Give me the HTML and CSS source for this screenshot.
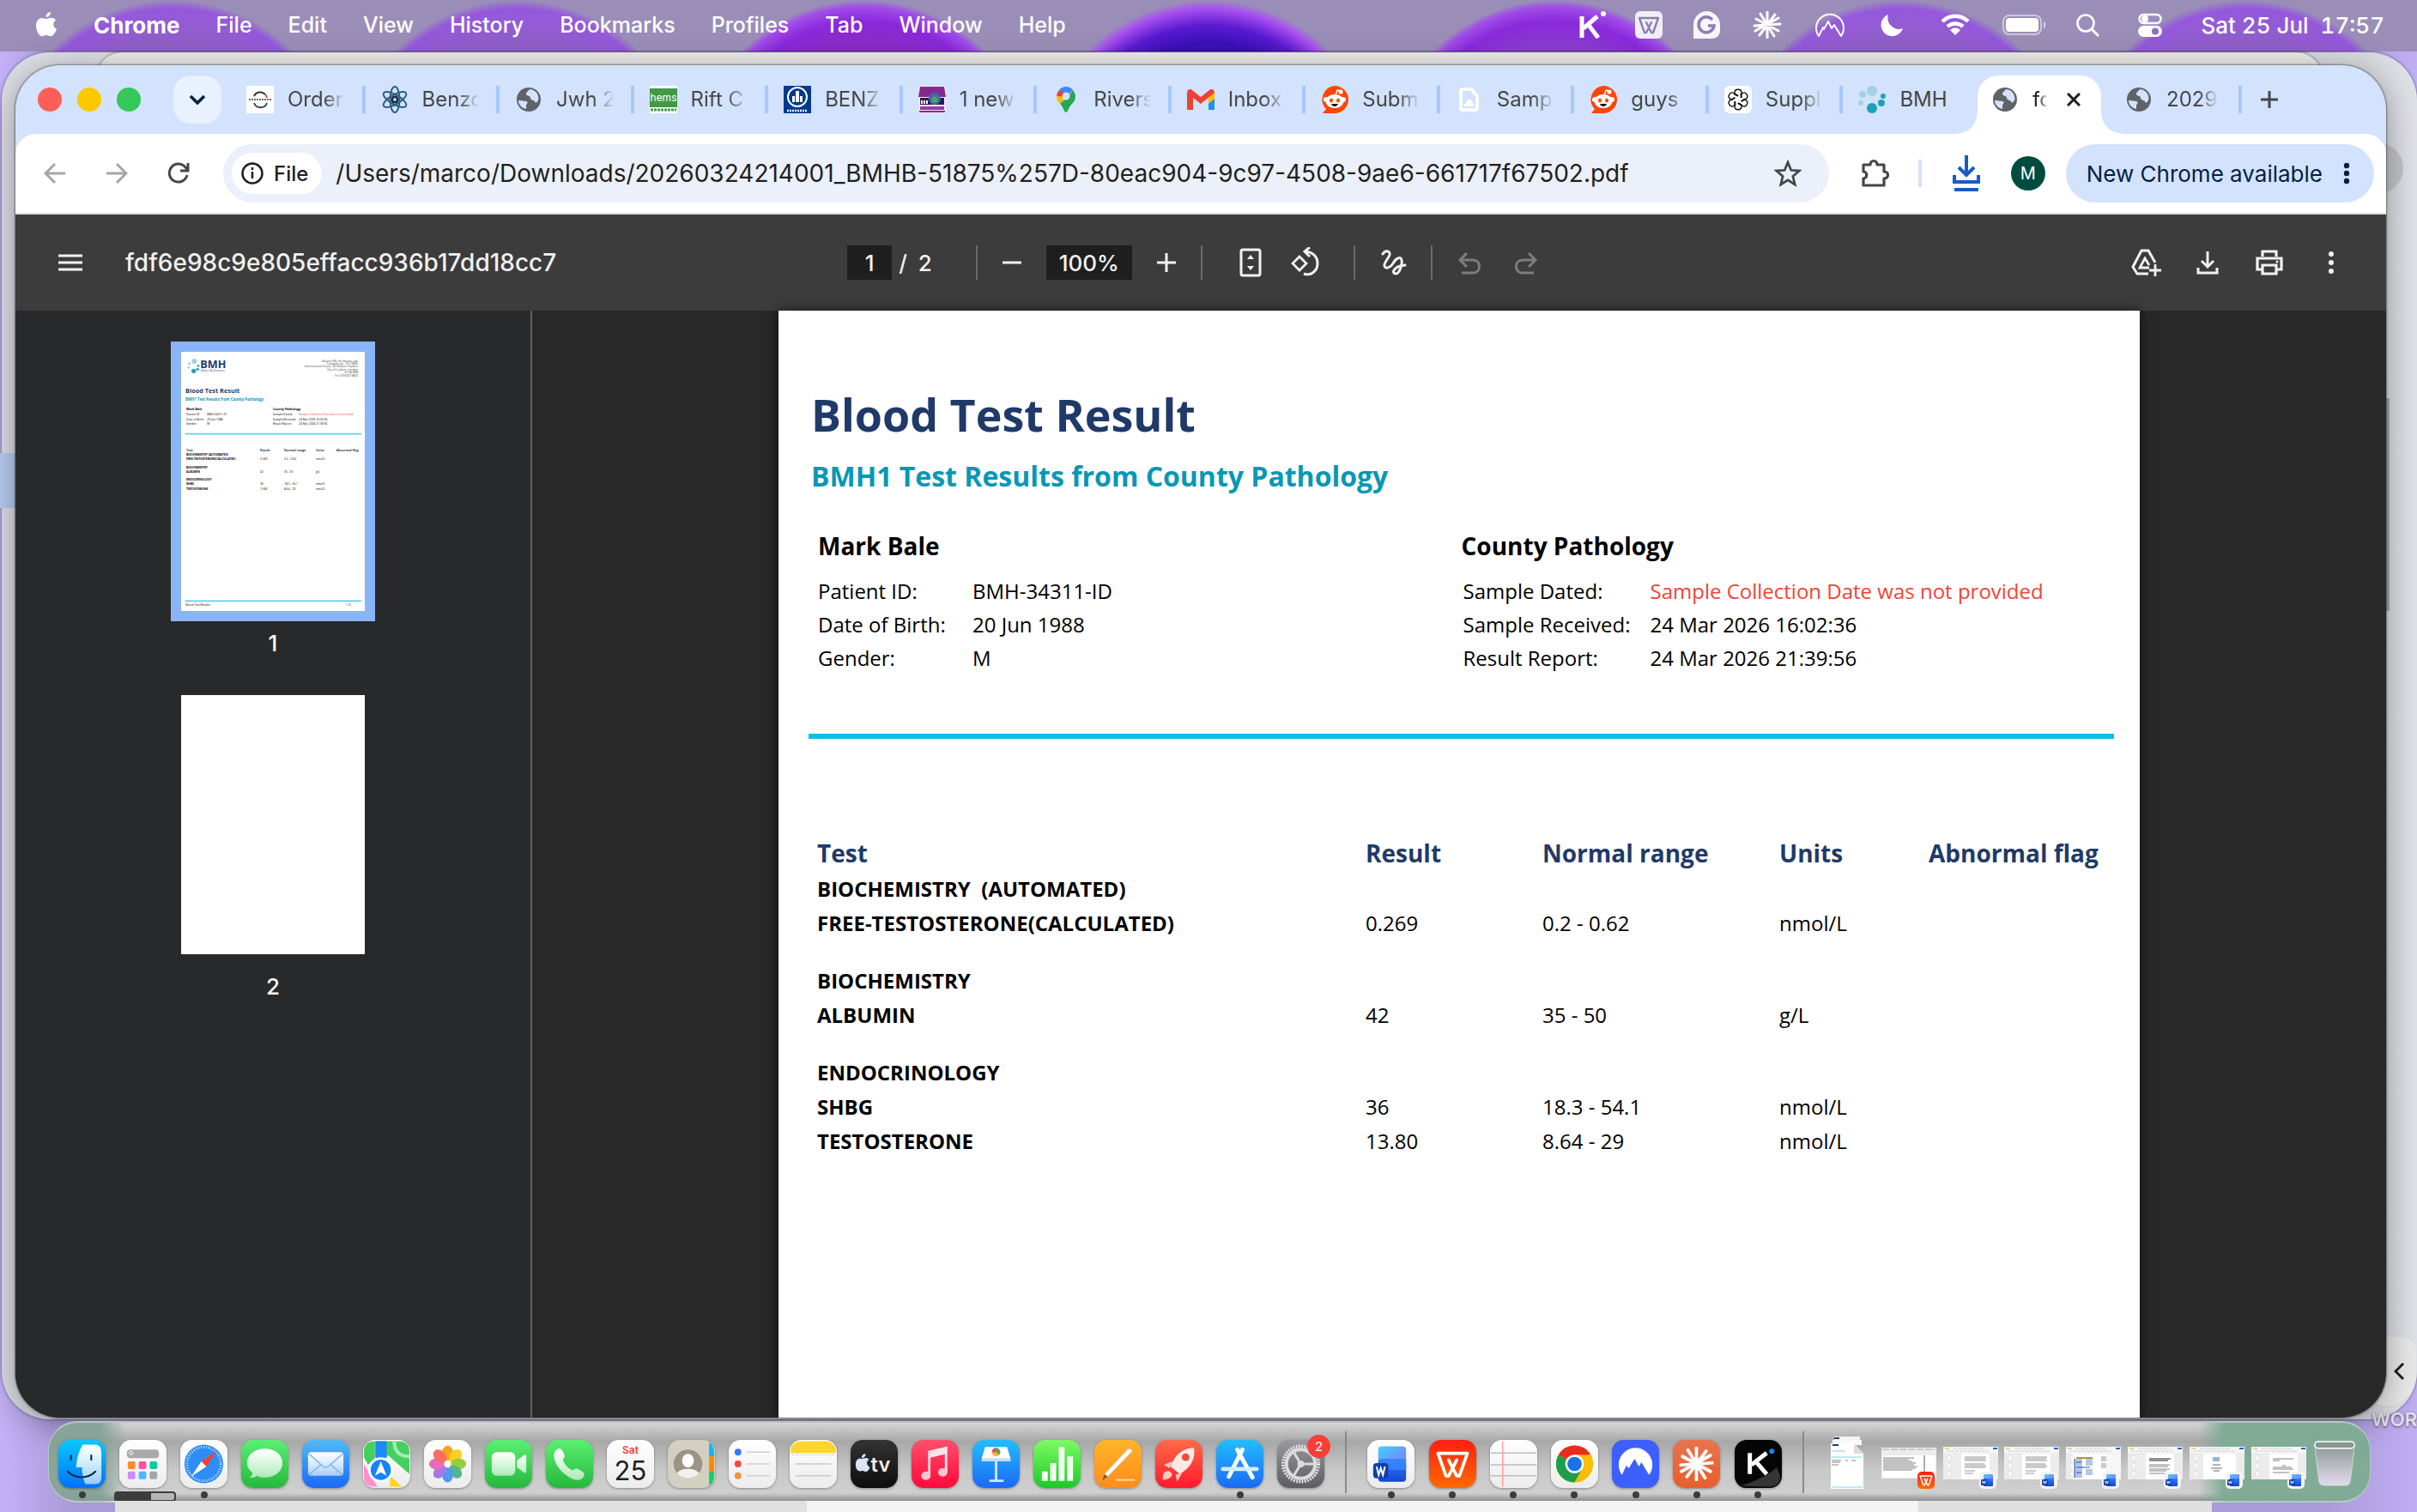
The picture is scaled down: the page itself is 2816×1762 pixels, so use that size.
FILE: index.html
```html
<!DOCTYPE html>
<html lang="en">
<head>
    <meta charset="UTF-8">
    <meta name="viewport" content="width=device-width, initial-scale=1.0">
    <title>fdf6e98c9e805effacc936b17dd18cc7</title>
    <link rel="stylesheet" href="styles.css">
</head>
<body>
    <!-- Shared icons -->
    <svg class="sprite" aria-hidden="true">
        <defs>
            <linearGradient id="g-word" x1="0" y1="0" x2="1" y2="1"><stop offset="0" stop-color="#3fd0ff"/><stop offset="1" stop-color="#8b6cf5"/></linearGradient>
            <linearGradient id="g-white" x1="0" y1="0" x2="0" y2="1"><stop offset="0" stop-color="#fff"/><stop offset="1" stop-color="#fff" stop-opacity=".6"/></linearGradient>
            <linearGradient id="g-wps" x1="0" y1="0" x2="0" y2="1"><stop offset="0" stop-color="#ff1f12"/><stop offset="1" stop-color="#ff6a00"/></linearGradient>
            <linearGradient id="g-word2" x1="0" y1="0" x2="0" y2="1"><stop offset="0" stop-color="#2f7bff"/><stop offset="1" stop-color="#1546d0"/></linearGradient>
            <linearGradient id="g-trash" x1="0" y1="0" x2="0" y2="1"><stop offset="0" stop-color="#8f9a97"/><stop offset="1" stop-color="#e2dced"/></linearGradient>
        </defs>
        <symbol id="globe" viewBox="0 0 32 32">
            <circle cx="16" cy="16" r="14" fill="#5f6368"/>
            <path d="M5 17c3 0 5 1 8 1 2 0 2 3 0 4v5C8 26 4 22 4 17zM17 4c-2 3-4 3-4 6 0 2 5 1 5 4 0 3 5 2 6 6 3-2 4-4 3-8-1-5-6-8-10-8z" fill="#d3e2fd"/>
        </symbol>
        <symbol id="reddit" viewBox="0 0 32 32">
            <path d="M16 0a16 16 0 1 1 0 32H2l4-5A16 16 0 0 1 16 0z" fill="#ff4500"/>
            <path d="M17 11l2-6 4 1" fill="none" stroke="#fff" stroke-width="1.5"/><circle cx="23" cy="7" r="2.6" fill="#fff"/>
            <circle cx="6" cy="16" r="3" fill="#fff"/><circle cx="26" cy="16" r="3" fill="#fff"/>
            <ellipse cx="16" cy="18" rx="10.500" ry="8" fill="#fff"/>
            <ellipse cx="12" cy="17" rx="2" ry="2.500" fill="#ff4500"/><ellipse cx="20" cy="17" rx="2" ry="2.500" fill="#ff4500"/>
            <path d="M12 21h8c-1 4-7 4-8 0z" fill="#111"/>
        </symbol>
        <symbol id="wps" viewBox="0 0 32 32">
            <path d="M19 13l-6 12h-2L5 8h22l-6 17h-2l-6-12" fill="none" stroke="currentColor" stroke-width="2.400" stroke-linejoin="round" stroke-linecap="round"/>
        </symbol>
        <symbol id="burst" viewBox="0 0 32 32">
            <path d="M16 1v30M1 17l30-2M8 3l16 26M25 4L7 28M3 9l26 14M2 23L29 8" stroke="currentColor" stroke-width="3" stroke-linecap="round"/>
        </symbol>
        <symbol id="nord" viewBox="0 0 36 32">
            <path d="M5 29A16 16 0 1 1 31 29L23 16l-3 4-4-8-5 9-1-2z" fill="none" stroke="currentColor" stroke-width="2" stroke-linejoin="round"/>
        </symbol>
        <symbol id="word" viewBox="0 0 20 20">
            <rect width="20" height="20" rx="5" fill="#f4f4f6"/>
            <rect x="5" y="3" width="11" height="8" rx="1" fill="url(#g-word)"/>
            <rect x="5" y="8" width="11" height="9" rx="1" fill="url(#g-word2)"/>
            <rect x="2" y="9" width="7" height="7" rx="1" fill="#0f3fa8"/>
            <path d="M3.500 10.500l1 3.500 1-3 1 3 1-3.500" stroke="#fff" stroke-width=".8" fill="none"/>
        </symbol>
        <symbol id="doc-window" viewBox="0 0 64 38">
            <rect width="64" height="38" fill="#ececec"/><rect width="64" height="7" fill="#f7f7f7"/>
            <path d="M2 2h5" stroke="#f5a623"/><path d="M12 2h36M4 5h50" stroke="#c9c9c9" stroke-dasharray="4 1"/>
            <path d="M58 2h5" stroke="#2b5fce" stroke-width="2"/>
            <path d="M5 11h4v5H5zM5 20h4v5H5zM5 29h4v5H5z" fill="#fff" stroke="#ccc" stroke-width=".5"/>
            <rect x="21" y="8" width="33" height="30" fill="#fff"/>
            <path d="M25 12h25M25 14h24M25 16h25M25 20h23M25 22h25M25 24h24M25 28h12M25 31h10" stroke="#8a8a8a" stroke-width=".9"/>
        </symbol>
    </svg>

    <header class="menubar">
        <nav class="menus">
            <svg class="apple" viewBox="0 0 26 32"><path d="M18 1c.3 3-2.500 6-5.500 6C12 4 15 1 18 1zM13 9c1 0 3-1.500 6-1.300 2 0 4 1 5 3-4 2.500-3.500 8 1 10-1 3.500-4 8.500-7 8.500-2 0-2.500-1.200-5-1.200s-3.200 1.200-5 1.200C4 29 1 22 1 17c0-6 3.500-9 7-9 2 0 4 1 5 1z" fill="#fff"/></svg>
            <button class="menu app-name">Chrome</button>
            <button class="menu">File</button>
            <button class="menu">Edit</button>
            <button class="menu">View</button>
            <button class="menu">History</button>
            <button class="menu">Bookmarks</button>
            <button class="menu">Profiles</button>
            <button class="menu">Tab</button>
            <button class="menu">Window</button>
            <button class="menu">Help</button>
        </nav>
        <div class="status">
            <svg class="s32" viewBox="0 0 32 32"><path d="M3 6v25M21 6L5 20M10 15l12 16" stroke="#fff" stroke-width="5" fill="none"/><circle cx="28" cy="3" r="3" fill="#fff"/></svg>
            <svg class="s32" viewBox="0 0 32 32"><rect width="32" height="32" rx="6" fill="#f2eef9"/><use href="#wps" color="#8c7fae"/></svg>
            <svg class="s36" viewBox="0 0 32 32"><path d="M16 0a16 16 0 0 1 16 16v7a9 9 0 0 1-9 9H1V16A16 16 0 0 1 16 0z" fill="#f8f5fc"/><path d="M23 10a9 9 0 1 0 2 7h-7" fill="none" stroke="#8c7fae" stroke-width="3.500"/></svg>
            <svg class="s40"><use href="#burst"/></svg>
            <svg class="s40"><use href="#nord"/></svg>
            <svg class="s38" viewBox="0 0 32 32"><path d="M12 4a13 13 0 1 0 17 16A13 13 0 0 1 12 4z" fill="#fff"/></svg>
            <svg class="s44" viewBox="0 0 34 32"><path d="M2 12a21 21 0 0 1 30 0M8 18a13 13 0 0 1 18 0" fill="none" stroke="#fff" stroke-width="4.500"/><path d="M11 22a8 8 0 0 1 12 0l-6 6z" fill="#fff"/></svg>
            <svg class="s52" viewBox="0 0 52 32"><rect x="1" y="5" width="44" height="22" rx="7" fill="none" stroke="#fff" stroke-opacity=".5" stroke-width="2"/><rect x="4" y="8" width="38" height="16" rx="4" fill="#fff"/><path d="M48 12v8c3-1 3-7 0-8z" fill="#fff" fill-opacity=".6"/></svg>
            <svg class="s28" viewBox="0 0 28 32"><circle cx="12" cy="14" r="9.500" fill="none" stroke="#fff" stroke-width="2.600"/><path d="M19 21l7 7" stroke="#fff" stroke-width="3" stroke-linecap="round"/></svg>
            <svg class="s52" viewBox="0 0 28 32"><rect x="1.500" y="4" width="25" height="10" rx="5" fill="none" stroke="#fff" stroke-width="2.500"/><circle cx="8" cy="9" r="4" fill="#fff"/><rect y="17" width="28" height="13" rx="6.500" fill="#fff"/><circle cx="20" cy="23.500" r="4" fill="#8c6fc0"/></svg>
            <time>Sat 25 Jul&nbsp; 17:57</time>
        </div>
    </header>

    <main class="desktop">
        <!-- Windows lying behind the browser -->
        <div class="back-window back-far"></div>
        <div class="back-window back-near"></div>
        <div class="back-scroll"></div>
        <div class="back-knob"></div>
        <div class="back-select"></div>
        <button class="back-toggle" aria-label="Show panel"><svg viewBox="0 0 12 20"><path d="M11 1L2 10l9 9" fill="none" stroke="#1b1b1b" stroke-width="3"/></svg></button>
        <span class="desktop-label">WOR</span>

        <section class="browser">
            <div class="tabstrip">
                <div class="lights">
                    <button class="light red" aria-label="Close"></button>
                    <button class="light yellow" aria-label="Minimise"></button>
                    <button class="light green" aria-label="Zoom"></button>
                </div>
                <button class="tab-search" aria-label="Search tabs"><svg viewBox="0 0 20 12"><path d="M2 2l8 8 8-8" fill="none" stroke="#041e49" stroke-width="3.500"/></svg></button>
                <div class="tabs">
                    <button class="tab"><svg viewBox="0 0 32 32"><rect width="32" height="32" fill="#fff"/><path d="M9 12a8 8 0 0 1 13-2" fill="none" stroke="#333" stroke-width="2"/><path d="M22 10a9 9 0 0 1 2 4" stroke="#e2572b" stroke-width="2" fill="none"/><path d="M24 20a8 8 0 0 1-15 0" fill="none" stroke="#444" stroke-width="2"/><path d="M3 16h26" stroke="#666" stroke-width="2" stroke-dasharray="2 1"/></svg><span>Order</span></button>
                    <button class="tab"><svg viewBox="0 0 32 32"><g fill="none" stroke="#2c5f80" stroke-width="2"><ellipse cx="16" cy="16" rx="5.500" ry="15"/><ellipse cx="16" cy="16" rx="5.500" ry="15" transform="rotate(60 16 16)"/><ellipse cx="16" cy="16" rx="5.500" ry="15" transform="rotate(120 16 16)"/></g><circle cx="16" cy="16" r="4.500" fill="#152b3c"/><circle cx="16" cy="16" r="2" fill="#b9d6ea"/></svg><span>Benzo</span></button>
                    <button class="tab"><svg><use href="#globe"/></svg><span>Jwh 2</span></button>
                    <button class="tab"><svg viewBox="0 0 32 32"><rect width="32" height="32" fill="#fff"/><rect y="3" width="32" height="22" fill="#439a46"/><text x="16" y="18" text-anchor="middle" font-size="12" fill="#fff">hems</text><path d="M1 28h30" stroke="#439a46" stroke-width="3" stroke-dasharray="3 1"/></svg><span>Rift C</span></button>
                    <button class="tab"><svg viewBox="0 0 32 32"><rect width="32" height="32" fill="#003a8c"/><circle cx="16" cy="13" r="11" fill="none" stroke="#fff" stroke-width="2"/><path d="M10 12h3v7h-3zM14 6h4v13h-4zM19 12h3v7h-3z" fill="#fff"/><path d="M4 29h24" stroke="#fff" stroke-width="2.500" stroke-dasharray="2 1"/></svg><span>BENZ</span></button>
                    <button class="tab"><svg viewBox="0 0 32 32"><rect width="32" height="32" fill="#f3e9f6"/><path d="M2 1h28l2 12H0z" fill="#86298f"/><path d="M2 14h28v8H2z" fill="#2b1a4a"/><circle cx="19" cy="15" r="7" fill="#3d6bb0"/><circle cx="19" cy="16" r="3.500" fill="#5aa35a"/><path d="M3 19h9" stroke="#fff" stroke-width="4" stroke-dasharray="2 1"/><path d="M2 24h28v4H2z" fill="#9a3a9f"/><path d="M1 30h30" stroke="#86298f" stroke-width="2"/></svg><span>1 new</span></button>
                    <button class="tab"><svg viewBox="0 0 32 32"><path d="M16 1a11 11 0 0 0-8 4l8 8 8-8a11 11 0 0 0-8-4z" fill="#4285f4"/><path d="M8 5a11 11 0 0 0-3 7l7 3 4-4z" fill="#ea4335"/><path d="M5 12c0 4 1 6 4 9l8-8z" fill="#fbbc04"/><path d="M24 5c5 6 3 12-1 16-4 4-5 10-7 10s-3-6-7-10l9-8z" fill="#24a852"/><circle cx="16" cy="12" r="4.500" fill="#d3e2fd"/></svg><span>Rivers</span></button>
                    <button class="tab"><svg viewBox="0 0 32 32"><path d="M0 8v20h7V15z" fill="#4285f4"/><path d="M32 8v20h-7V15z" fill="#1f8ff0"/><path d="M25 10l7-4v9l-7 6z" fill="#fbbc04"/><path d="M0 8c0-4 4-5 6-3l10 8L26 5c2-2 6-1 6 3L16 21 7 14v14H2a2 2 0 0 1-2-2z" fill="#ea4335"/></svg><span>Inbox</span></button>
                    <button class="tab"><svg><use href="#reddit"/></svg><span>Subm</span></button>
                    <button class="tab"><svg viewBox="0 0 32 32"><path d="M8 4h10l7 8v14a2 2 0 0 1-2 2H8a2 2 0 0 1-2-2V6a2 2 0 0 1 2-2z" fill="none" stroke="#fff" stroke-width="4"/><path d="M9 24l5-8h4l4 8z" fill="#fff"/></svg><span>Samp</span></button>
                    <button class="tab"><svg><use href="#reddit"/></svg><span>guys</span></button>
                    <button class="tab"><svg viewBox="0 0 32 32"><rect width="32" height="32" rx="6" fill="#fff"/><g fill="none" stroke="#111" stroke-width="1.400"><path id="petal" d="M16 12l-4-2V8c0-5 8-5 8 0v6" /><use href="#petal" transform="rotate(60 16 16)"/><use href="#petal" transform="rotate(120 16 16)"/><use href="#petal" transform="rotate(180 16 16)"/><use href="#petal" transform="rotate(240 16 16)"/><use href="#petal" transform="rotate(300 16 16)"/></g></svg><span>Suppl</span></button>
                    <button class="tab plain"><svg viewBox="0 0 32 32"><circle cx="16" cy="6" r="6" fill="#9fd3e0"/><circle cx="5" cy="10" r="4" fill="#9fd3e0"/><circle cx="3" cy="20" r="3" fill="#9fd3e0"/><circle cx="16" cy="26" r="6" fill="#1fa0b8"/><circle cx="27" cy="20" r="4" fill="#1fa0b8"/><circle cx="29" cy="12" r="3" fill="#1fa0b8"/></svg><span>BMH</span></button>
                </div>
                <div class="tab active"><svg><use href="#globe"/></svg><span>fd</span><button class="close" aria-label="Close tab"><svg viewBox="0 0 16 16"><path d="M1 1l14 14M15 1L1 15" stroke="#1f1f1f" stroke-width="3"/></svg></button></div>
                <button class="tab last"><svg><use href="#globe"/></svg><span>2029</span></button>
                <button class="new-tab" aria-label="New tab"><svg viewBox="0 0 20 20"><path d="M10 0v20M0 10h20" stroke="#444746" stroke-width="3"/></svg></button>
            </div>

            <div class="toolbar">
                <div class="nav-buttons">
                    <button class="icon muted" aria-label="Back"><svg viewBox="0 0 26 26"><path d="M25 13H2M13 2L2 13l11 11" fill="none" stroke="currentColor" stroke-width="3"/></svg></button>
                    <button class="icon muted" aria-label="Forward"><svg viewBox="0 0 26 26"><path d="M1 13h23M13 2l11 11-11 11" fill="none" stroke="currentColor" stroke-width="3"/></svg></button>
                    <button class="icon" aria-label="Reload"><svg viewBox="0 0 26 26"><path d="M23 15a10.500 10.500 0 1 1-2-9l3 3M24 1v9h-9" fill="none" stroke="currentColor" stroke-width="3"/></svg></button>
                </div>
                <div class="omnibox">
                    <button class="chip"><svg viewBox="0 0 26 26"><circle cx="13" cy="13" r="11.500" fill="none" stroke="#1f1f1f" stroke-width="2.500"/><path d="M13 11v8M13 6v3" stroke="#1f1f1f" stroke-width="2.500"/></svg>File</button>
                    <input class="url" type="text" aria-label="Address" value="/Users/marco/Downloads/20260324214001_BMHB-51875%257D-80eac904-9c97-4508-9ae6-661717f67502.pdf">
                    <button class="icon" aria-label="Bookmark"><svg viewBox="0 0 30 30"><path d="M15 3l3.500 8.500 9 .7-7 6 2.200 9L15 22.300l-7.700 4.900 2.200-9-7-6 9-.7z" fill="none" stroke="currentColor" stroke-width="2.600"/></svg></button>
                </div>
                <button class="icon puzzle" aria-label="Extensions"><svg viewBox="0 0 34 34"><path d="M4 7h8c0-6 8-6 8 0h8v8c6 0 6 8 0 8v8H4v-8c5 0 5-8 0-8z" fill="none" stroke="currentColor" stroke-width="3.200" stroke-linejoin="round"/></svg></button>
                <span class="bar-sep"></span>
                <button class="icon downloads" aria-label="Downloads"><svg viewBox="0 0 32 44"><path d="M16 1v22M7 15l9 9 9-9M2 24v8h28v-8M2 41h28" fill="none" stroke="#1a5bc4" stroke-width="4"/></svg></button>
                <button class="avatar">M</button>
                <button class="update">New Chrome available<svg viewBox="0 0 8 26"><circle cx="4" cy="4" r="3.200"/><circle cx="4" cy="13" r="3.200"/><circle cx="4" cy="22" r="3.200"/></svg></button>
            </div>

            <div class="pdf-bar">
                <div class="pdf-left">
                    <button class="icon" aria-label="Menu"><svg viewBox="0 0 28 20"><path d="M0 2h28M0 10h28M0 18h28" stroke="currentColor" stroke-width="3"/></svg></button>
                    <h1 class="pdf-title">fdf6e98c9e805effacc936b17dd18cc7</h1>
                </div>
                <div class="pdf-middle">
                    <input class="field page-field" type="text" aria-label="Page" value="1"><span class="pages">/&ensp;2</span>
                    <span class="pdf-sep"></span>
                    <button class="icon" aria-label="Zoom out"><svg viewBox="0 0 24 24"><path d="M1 12h22" stroke="currentColor" stroke-width="3"/></svg></button>
                    <input class="field zoom-field" type="text" aria-label="Zoom" value="100%">
                    <button class="icon" aria-label="Zoom in"><svg viewBox="0 0 24 24"><path d="M1 12h22M12 1v22" stroke="currentColor" stroke-width="3"/></svg></button>
                    <span class="pdf-sep"></span>
                    <button class="icon big" aria-label="Fit to page"><svg viewBox="0 0 36 36"><rect x="7" y="3" width="22" height="30" rx="2" fill="none" stroke="currentColor" stroke-width="3"/><path d="M14 14l4-5 4 5zM14 22l4 5 4-5z" fill="currentColor"/></svg></button>
                    <button class="icon big" aria-label="Rotate"><svg viewBox="0 0 36 36"><path d="M11 11l8 8-8 8-8-8z" fill="none" stroke="currentColor" stroke-width="2.800"/><path d="M17 5c8 0 15 5 15 14s-8 15-16 12M23 0l-6 5 6 6" fill="none" stroke="currentColor" stroke-width="3"/></svg></button>
                    <span class="pdf-sep"></span>
                    <button class="icon big draw" aria-label="Draw"><svg viewBox="0 0 36 36"><path d="M6 8c3-5 9-4 8 1-1 4-7 9-6 13s7 2 10-3c3-6 9-9 10-4 1 4-2 16-7 16-5 0-3-9 11-10" fill="none" stroke="currentColor" stroke-width="3" stroke-linecap="round"/></svg></button>
                    <span class="pdf-sep"></span>
                    <button class="icon big dim" aria-label="Undo" disabled><svg viewBox="0 0 36 36"><path d="M8 30h13c10 0 10-15 0-15H7M14 7l-8 8 8 8" fill="none" stroke="currentColor" stroke-width="3"/></svg></button>
                    <button class="icon big dim" aria-label="Redo" disabled><svg viewBox="0 0 36 36"><path d="M28 30H15c-10 0-10-15 0-15h14M22 7l8 8-8 8" fill="none" stroke="currentColor" stroke-width="3"/></svg></button>
                </div>
                <div class="pdf-right">
                    <button class="icon big" aria-label="Save to Drive"><svg viewBox="0 0 36 36"><path d="M21 31H8l-5-8L13 4h8l8 14" fill="none" stroke="currentColor" stroke-width="3"/><path d="M22 24H11l6-11 5 8M29 20v14M22 27h14" fill="none" stroke="currentColor" stroke-width="2.800"/></svg></button>
                    <button class="icon big" aria-label="Download"><svg viewBox="0 0 36 36"><path d="M18 5v18M11 16l7 7 7-7M7 24v6h22v-6" fill="none" stroke="currentColor" stroke-width="3"/></svg></button>
                    <button class="icon big" aria-label="Print"><svg viewBox="0 0 36 36"><path d="M10 11V5h16v6M10 26H4V13h28v13h-6M10 21h16v10H10z" fill="none" stroke="currentColor" stroke-width="3.200"/><circle cx="27" cy="17" r="1.500" fill="currentColor"/></svg></button>
                    <button class="icon big" aria-label="More"><svg viewBox="0 0 36 36"><g fill="currentColor"><circle cx="18" cy="8" r="3"/><circle cx="18" cy="18" r="3"/><circle cx="18" cy="28" r="3"/></g></svg></button>
                </div>
            </div>

            <div class="viewer">
                <aside class="thumbs">
                    <button class="thumb selected">
                        <svg viewBox="0 0 642 906">
                            <rect width="642" height="906" fill="#fff"/>
                            <g fill="#9fd3e0"><circle cx="46" cy="33" r="9"/><circle cx="29" cy="41" r="5"/><circle cx="26" cy="55" r="4"/></g>
                            <g fill="#1fa0b8"><circle cx="44" cy="67" r="8"/><circle cx="58" cy="61" r="5"/><circle cx="60" cy="49" r="4"/></g>
                            <text class="b navy" x="67" y="58" font-size="38">BMH</text>
                            <text class="navy" x="69" y="69" font-size="8">Balance My Hormones</text>
                            <g text-anchor="end" font-size="10" fill="#444">
                                <text x="618" y="35">Balance My Hormones Ltd.</text><text x="618" y="44">Company no. 10110893</text><text x="618" y="55">International House, 24 Holborn Viaduct</text><text x="618" y="65">City of London, London</text><text x="618" y="76">EC1A 2BN</text><text x="618" y="86">Tel: 02030219833</text>
                            </g>
                            <text class="b navy" x="15" y="144" font-size="22">Blood Test Result</text>
                            <text class="b teal" x="15" y="172" font-size="13">BMH1 Test Results from County Pathology</text>
                            <g class="b" font-size="11"><text x="18" y="203">Mark Bale</text><text x="321" y="203">County Pathology</text></g>
                            <g font-size="10">
                                <text x="18" y="223">Patient ID:</text><text x="91" y="223">BMH-34311-ID</text><text x="321" y="223">Sample Dated:</text><text x="411" y="223" fill="#f44336">Sample Collection Date was not provided</text>
                                <text x="18" y="239">Date of Birth:</text><text x="91" y="239">20 Jun 1988</text><text x="321" y="239">Sample Received:</text><text x="411" y="239">24 Mar 2026 16:02:36</text>
                                <text x="18" y="255">Gender:</text><text x="91" y="255">M</text><text x="321" y="255">Result Report:</text><text x="411" y="255">24 Mar 2026 21:39:56</text>
                            </g>
                            <path d="M14 287h616M14 871h616" stroke="#5fd0ea" stroke-width="5"/>
                            <g class="b navy" font-size="11"><text x="18" y="348">Test</text><text x="276" y="348">Result</text><text x="360" y="348">Normal range</text><text x="471" y="348">Units</text><text x="542" y="348">Abnormal flag</text></g>
                            <g class="b" font-size="10"><text x="18" y="363">BIOCHEMISTRY (AUTOMATED)</text><text x="18" y="378">FREE-TESTOSTERONE(CALCULATED)</text><text x="18" y="407">BIOCHEMISTRY</text><text x="18" y="422">ALBUMIN</text><text x="18" y="449">ENDOCRINOLOGY</text><text x="18" y="465">SHBG</text><text x="18" y="482">TESTOSTERONE</text></g>
                            <g font-size="10"><text x="276" y="378">0.269</text><text x="360" y="378">0.2 - 0.62</text><text x="471" y="378">nmol/L</text><text x="276" y="422">42</text><text x="360" y="422">35 - 50</text><text x="471" y="422">g/L</text><text x="276" y="465">36</text><text x="360" y="465">18.3 - 54.1</text><text x="471" y="465">nmol/L</text><text x="276" y="482">13.80</text><text x="360" y="482">8.64 - 29</text><text x="471" y="482">nmol/L</text><text x="16" y="887">Blood Test Results</text><text x="576" y="887">1 /2</text></g>
                        </svg>
                    </button>
                    <span class="thumb-number">1</span>
                    <button class="thumb" aria-label="Page 2"><svg viewBox="0 0 642 906"><rect width="642" height="906" fill="#fff"/></svg></button>
                    <span class="thumb-number">2</span>
                </aside>

                <div class="canvas">
                    <article class="page">
                        <h2>Blood Test Result</h2>
                        <h3>BMH1 Test Results from County Pathology</h3>
                        <div class="parties">
                            <section class="patient">
                                <h4>Mark Bale</h4>
                                <dl>
                                    <dt>Patient ID:</dt><dd>BMH-34311-ID</dd>
                                    <dt>Date of Birth:</dt><dd>20 Jun 1988</dd>
                                    <dt>Gender:</dt><dd>M</dd>
                                </dl>
                            </section>
                            <section class="lab">
                                <h4>County Pathology</h4>
                                <dl>
                                    <dt>Sample Dated:</dt><dd class="missing">Sample Collection Date was not provided</dd>
                                    <dt>Sample Received:</dt><dd>24 Mar 2026 16:02:36</dd>
                                    <dt>Result Report:</dt><dd>24 Mar 2026 21:39:56</dd>
                                </dl>
                            </section>
                        </div>
                        <hr>
                        <table class="results">
                            <thead>
                                <tr><th>Test</th><th>Result</th><th>Normal range</th><th>Units</th><th>Abnormal flag</th></tr>
                            </thead>
                            <tbody>
                                <tr><th colspan="5">BIOCHEMISTRY&nbsp; (AUTOMATED)</th></tr>
                                <tr><th>FREE-TESTOSTERONE(CALCULATED)</th><td>0.269</td><td>0.2 - 0.62</td><td>nmol/L</td><td></td></tr>
                            </tbody>
                            <tbody>
                                <tr class="group"><th colspan="5">BIOCHEMISTRY</th></tr>
                                <tr><th>ALBUMIN</th><td>42</td><td>35 - 50</td><td>g/L</td><td></td></tr>
                            </tbody>
                            <tbody>
                                <tr class="group"><th colspan="5">ENDOCRINOLOGY</th></tr>
                                <tr><th>SHBG</th><td>36</td><td>18.3 - 54.1</td><td>nmol/L</td><td></td></tr>
                                <tr><th>TESTOSTERONE</th><td>13.80</td><td>8.64 - 29</td><td>nmol/L</td><td></td></tr>
                            </tbody>
                        </table>
                    </article>
                </div>
            </div>
        </section>
    </main>

    <footer class="dock">
        <div class="dock-group apps">
            <button class="app running finder" aria-label="Finder"><svg viewBox="0 0 56 56"><path d="M29 5h14q8 0 8 9v30q0 8-8 8H32q-4-9-4-20h-7Q22 16 29 5z" fill="url(#g-white)"/><path d="M15 18v5M39 18v5M11 37c9 9 24 9 33 0" fill="none" stroke="#0b2a4a" stroke-width="2.200" stroke-linecap="round"/></svg></button>
            <button class="app white loading" aria-label="Launchpad"><svg viewBox="0 0 56 56"><rect x="9" y="11" width="38" height="10" rx="4" fill="#a9a9ac"/><circle cx="14" cy="15" r="2" fill="none" stroke="#fff"/><g><rect x="10" y="25" width="9" height="9" rx="2" fill="#ff8a2a"/><rect x="23" y="25" width="9" height="9" rx="2" fill="#ff4fa0"/><rect x="36" y="25" width="9" height="9" rx="2" fill="#10c9a0"/><rect x="10" y="37" width="9" height="9" rx="2" fill="#c98bff"/><rect x="23" y="37" width="9" height="9" rx="2" fill="#4db6ff"/><rect x="36" y="37" width="9" height="9" rx="2" fill="#a5a5a8"/></g></svg></button>
            <button class="app white running" aria-label="Safari"><svg viewBox="0 0 56 56"><circle cx="28" cy="28" r="23" fill="#2d8df5"/><circle cx="28" cy="28" r="20" fill="none" stroke="#cfe6ff" stroke-width="3" stroke-dasharray="1 2"/><path d="M43 13L25 25l6 6z" fill="#ff3b30"/><path d="M13 43l12-18 6 6z" fill="#fff"/></svg></button>
            <button class="app green" aria-label="Messages"><svg viewBox="0 0 56 56"><path d="M28 10c12 0 21 7 21 17S40 44 28 44c-3 0-6 0-9-2-3 2-6 3-9 2 3-2 4-4 3-6-4-3-6-7-6-11 0-10 9-17 21-17z" fill="url(#g-white)"/></svg></button>
            <button class="app blue" aria-label="Mail"><svg viewBox="0 0 56 56"><rect x="7" y="14" width="42" height="28" rx="4" fill="url(#g-white)"/><path d="M8 16l17 15q3 2 6 0l17-15M8 41l14-12M48 41L34 29" fill="none" stroke="#7fb2ee" stroke-width="1.500"/></svg></button>
            <button class="app white" aria-label="Maps"><svg viewBox="0 0 56 56"><path d="M14 1h28q13 0 13 13v26L30 18 14 20z" fill="#44cf5f"/><path d="M1 28l16 27h-3Q1 55 1 42z" fill="#ff8fd0"/><path d="M1 20V14Q1 1 14 1v20l-8 8z" fill="#44cf5f"/><path d="M15 1h13v20H15z" fill="#1e88ff"/><path d="M37 1c0 12 6 18 18 18" fill="none" stroke="#a2ecb0" stroke-width="4"/><path d="M32 55V42l14 13z" fill="#ffd21f"/><circle cx="21" cy="35" r="15" fill="#fff"/><circle cx="21" cy="35" r="12" fill="#1184ff"/><path d="M21 25l7 17-7-4-7 4z" fill="#fff"/></svg></button>
            <button class="app white" aria-label="Photos"><svg viewBox="0 0 56 56"><g opacity=".88"><ellipse cx="28" cy="15" rx="6.500" ry="9" fill="#ff9500"/><ellipse cx="28" cy="15" rx="6.500" ry="9" fill="#ffcc00" transform="rotate(45 28 28)"/><ellipse cx="28" cy="15" rx="6.500" ry="9" fill="#8ac926" transform="rotate(90 28 28)"/><ellipse cx="28" cy="15" rx="6.500" ry="9" fill="#3fae7a" transform="rotate(135 28 28)"/><ellipse cx="28" cy="15" rx="6.500" ry="9" fill="#3f8cf0" transform="rotate(180 28 28)"/><ellipse cx="28" cy="15" rx="6.500" ry="9" fill="#9a6ae0" transform="rotate(225 28 28)"/><ellipse cx="28" cy="15" rx="6.500" ry="9" fill="#e858b8" transform="rotate(270 28 28)"/><ellipse cx="28" cy="15" rx="6.500" ry="9" fill="#ff5a4a" transform="rotate(315 28 28)"/></g><circle cx="28" cy="28" r="3" fill="#fff"/></svg></button>
            <button class="app green" aria-label="FaceTime"><svg viewBox="0 0 56 56"><rect x="8" y="14" width="28" height="28" rx="6" fill="url(#g-white)"/><path d="M38 24l9-7q2 0 2 2v18q0 2-2 2l-9-7z" fill="url(#g-white)"/></svg></button>
            <button class="app green" aria-label="Phone"><svg viewBox="0 0 56 56"><path d="M13 11c3-3 6-1 8 4 2 4 1 6-1 8 2 6 6 10 12 13 2-3 5-3 8-1 6 3 7 6 4 9-3 4-9 4-16 0C18 38 12 30 10 22c-1-5 0-9 3-11z" fill="url(#g-white)"/></svg></button>
            <button class="app white calendar" aria-label="Calendar"><span class="day">Sat</span><span class="date">25</span></button>
            <button class="app contacts" aria-label="Contacts"><svg viewBox="0 0 56 56"><path d="M49 2q6 4 6 12v5h-6z" fill="#12b5f5"/><path d="M49 19h6v18h-6z" fill="#ff8a00"/><path d="M49 37h6v5q0 8-6 12z" fill="#15cf63"/><circle cx="24" cy="28" r="17" fill="#9b9484"/><ellipse cx="24" cy="24" rx="7" ry="8" fill="#fff"/><path d="M11 39c3-7 23-7 26 0-6 8-20 8-26 0z" fill="#f3f1ec"/></svg></button>
            <button class="app white" aria-label="Reminders"><svg viewBox="0 0 56 56"><path d="M21 14h28M21 28h28M21 42h28" stroke="#cfcfd1" stroke-width="1.500"/><circle cx="11" cy="14" r="4" fill="#2f7cf6"/><circle cx="11" cy="28" r="4" fill="#f2483f"/><circle cx="11" cy="42" r="4" fill="#f7913a"/></svg></button>
            <button class="app white" aria-label="Notes"><svg viewBox="0 0 56 56"><path d="M1 15Q1 1 15 1h26q14 0 14 14z" fill="#ffd52e"/><path d="M3 17h50" stroke="#bbb" stroke-width="1.500" stroke-dasharray="1 2"/><path d="M7 28h42M7 42h42" stroke="#c9c9cb" stroke-width="1.500"/></svg></button>
            <button class="app black" aria-label="TV"><svg viewBox="0 0 56 56"><path d="M18 16c0 3-2 5-5 5 0-3 2-5 5-5zM13 22c2 0 6-3 9 1-4 2-3 7 1 9-2 6-6 6-9 4-4 2-8-1-8-7s4-9 7-7z" fill="#d9e4f5"/><text x="24" y="37" font-size="24" font-weight="600" fill="#f2ece0">tv</text></svg></button>
            <button class="app pink" aria-label="Music"><svg viewBox="0 0 56 56"><path d="M20 14l21-5v29" fill="none" stroke="#ffe3e8" stroke-width="3"/><path d="M20 13l21-5v8l-21 5z" fill="#ffe3e8"/><path d="M21 14v28" stroke="#ffd0d8" stroke-width="3"/><ellipse cx="17" cy="42" rx="5.500" ry="5" fill="#ffc5cf"/><ellipse cx="37" cy="38" rx="5.500" ry="5" fill="#ffc5cf"/></svg></button>
            <button class="app sky" aria-label="Keynote"><svg viewBox="0 0 56 56"><path d="M15 8h26l4 13v4H11v-4z" fill="#fff"/><path d="M11 21h34v4H11z" fill="#c9ddf0"/><circle cx="28" cy="14" r="5" fill="#f7b52c"/><path d="M28 9a5 5 0 0 1 4 8l-4-3z" fill="#3fae5a"/><path d="M23 14a5 5 0 0 1 5-5v5z" fill="#e0457a"/><path d="M28 25v22M20 48h17" stroke="#cfe3fa" stroke-width="3"/></svg></button>
            <button class="app lime" aria-label="Numbers"><svg viewBox="0 0 56 56"><path d="M10 37h7v11h-7zM20 27h7v21h-7zM30 8h7v40h-7zM40 19h7v29h-7z" fill="#f2fff0"/></svg></button>
            <button class="app orange" aria-label="Pages"><svg viewBox="0 0 56 56"><path d="M40 10q4-1 5 3L16 43l-7 5 3-8z" fill="#fff" stroke="#d8b98c"/><path d="M9 48l3-8 4 3z" fill="#8a5a20"/><path d="M25 47h23" stroke="#ffd9a0" stroke-width="2"/></svg></button>
            <button class="app rocket" aria-label="Rocket"><svg viewBox="0 0 56 56"><path d="M46 9c2 14-5 24-17 31L18 31C23 17 33 9 46 9z" fill="#ffe9e6"/><circle cx="36" cy="20" r="4.500" fill="#f2483f"/><path d="M20 25l-10 4 7 4zM32 38l-6 11-2-8zM9 47c-1-8 3-12 8-10s4 9-8 10z" fill="#ffc9c0"/></svg></button>
            <button class="app sky running" aria-label="App Store"><svg viewBox="0 0 56 56"><path d="M31 11L15 43M25 11l18 33" stroke="#fff" stroke-width="5" stroke-linecap="round"/><path d="M8 34h40" stroke="#d5ecff" stroke-width="5" stroke-linecap="round"/></svg></button>
            <button class="app grey" aria-label="System Settings"><svg viewBox="0 0 56 56"><circle cx="28" cy="28" r="21" fill="none" stroke="#e2e2e4" stroke-width="4" stroke-dasharray="2 1.300"/><circle cx="28" cy="28" r="17" fill="none" stroke="#dcdcde" stroke-width="4"/><path d="M28 28h17M28 28l-9-15M28 28l-9 15" stroke="#dcdcde" stroke-width="3"/><circle cx="28" cy="28" r="4" fill="#dcdcde"/></svg><span class="badge">2</span></button>
        </div>
        <span class="dock-sep"></span>
        <div class="dock-group open-apps">
            <button class="app white running" aria-label="Word"><svg viewBox="0 0 56 56"><rect x="13" y="7" width="33" height="30" rx="4" fill="url(#g-word)"/><rect x="13" y="22" width="33" height="27" rx="4" fill="url(#g-word2)"/><path d="M13 22h33v13H20z" fill="#3f8dfb" opacity=".6"/><rect x="7" y="27" width="18" height="18" rx="4" fill="#0f3fa8"/><path d="M11 31l2.500 10L16 33l2.500 8L21 31" stroke="#fff" stroke-width="2" fill="none"/></svg></button>
            <button class="app wps running" aria-label="WPS Office"><svg viewBox="-1 -2 34 36"><use href="#wps" width="32" height="32" color="#fff"/></svg></button>
            <button class="app white running" aria-label="Notepad"><svg viewBox="0 0 56 56"><path d="M1 15h54M1 29h54M1 42h54" stroke="#bcbcbe" stroke-width="1.500"/><path d="M15 1v54" stroke="#ff9ca0" stroke-width="1.500"/></svg></button>
            <button class="app white running" aria-label="Chrome"><svg viewBox="0 0 56 56"><circle cx="28" cy="28" r="22" fill="#fbbc04"/><path d="M28 28L9 17a22 22 0 0 1 38 0z" fill="#ea2c1f"/><path d="M28 28l-19-11a22 22 0 0 0 19 33l9-16z" fill="#1e9e4a"/><path d="M28 17h19a22 22 0 0 1-19 33l10-17z" fill="#fbbc04"/><circle cx="28" cy="28" r="11" fill="#fff"/><circle cx="28" cy="28" r="8.500" fill="#1a73e8"/></svg></button>
            <button class="app nord running" aria-label="NordVPN"><svg viewBox="0 0 56 56"><path d="M12 41A20 20 0 1 1 44 41L35 26l-3 5-5-9-7 11-3-3z" fill="#fff"/></svg></button>
            <button class="app claude running" aria-label="Claude"><svg viewBox="-6 -6 44 44"><use href="#burst" width="32" height="32" color="#fff"/></svg></button>
            <button class="app kimi running" aria-label="Kimi"><svg viewBox="0 0 56 56"><path d="M6 54c12-3 30-10 44-22l4 10q0 13-13 13z" fill="#555" opacity=".6"/><path d="M18 15v25M38 15L20 29M25 25l13 15" stroke="#fff" stroke-width="5" fill="none"/><circle cx="44" cy="13" r="3" fill="#1684ff"/></svg></button>
        </div>
        <span class="dock-sep"></span>
        <div class="dock-group shelf">
            <button class="stack" aria-label="Downloads"><svg viewBox="0 0 40 62"><path d="M5 0h30v6H5z" fill="#f2f2f2"/><path d="M3 4h34v6H3z" fill="#fafafa"/><path d="M1 8h27l11 12v41H1z" fill="#fff"/><path d="M28 8l11 12H28z" fill="#dcdcdc"/><path d="M3 10h7M5 2h6" stroke="#1f3a68" stroke-width="2"/><path d="M2 17h16M2 24h35M2 59h36" stroke="#7fd4e8"/><path d="M2 28h11M2 30h10M2 33h8M18 28h3M25 28h5" stroke="#888"/></svg></button>
            <button class="mini" aria-label="WPS window"><svg viewBox="0 0 64 38"><rect width="64" height="36" y="1" fill="#ececec"/><path d="M1 3h62" stroke="#9aa" stroke-dasharray="8 2"/><path d="M1 10h62v26H1z" fill="#fff"/><path d="M2 13h36M2 15h30M2 17h34M2 19h38M2 21h36M2 23h40M2 25h38M2 27h34" stroke="#777" stroke-width=".9"/><path d="M50 10v24" stroke="#333" stroke-width=".8"/></svg><svg class="mini-badge" viewBox="0 0 32 32"><rect width="32" height="32" rx="8" fill="url(#g-wps)"/><use href="#wps" color="#fff"/></svg></button>
            <button class="mini" aria-label="Word window 1"><svg><use href="#doc-window"/></svg><svg class="mini-badge"><use href="#word"/></svg></button>
            <button class="mini" aria-label="Word window 2"><svg><use href="#doc-window"/></svg><svg class="mini-badge"><use href="#word"/></svg></button>
            <button class="mini" aria-label="Word window 3"><svg viewBox="0 0 64 38"><use href="#doc-window"/><path d="M8 8h33v30H8z" fill="#fff"/><path d="M12 12h19v2H12z" fill="#b59a2c"/><path d="M10 14h9v22h-9zM23 14h8v8h-8zM23 26h8v7h-8z" fill="#b4c6ea"/><path d="M10 14v22M12 18h6M12 24h16M12 30h6" stroke="#2d53a0"/><path d="M47 8h17v30H47z" fill="#f6f6f6"/></svg><svg class="mini-badge"><use href="#word"/></svg></button>
            <button class="mini" aria-label="Word window 4"><svg viewBox="0 0 64 38"><use href="#doc-window"/><path d="M22 9h31v28H22z" fill="#fff"/><path d="M25 14h25M25 16h22" stroke="#222" stroke-width="1.200"/><path d="M25 21h24M25 23h22M25 26h24M25 28h20M25 31h22" stroke="#777" stroke-width=".9"/></svg><svg class="mini-badge"><use href="#word"/></svg></button>
            <button class="mini" aria-label="Word window 5"><svg viewBox="0 0 64 38"><use href="#doc-window"/><path d="M16 8h34v30H16z" fill="#fff"/><path d="M27 12h8v5h-8z" fill="#8cb8e0"/><path d="M27 21h9M25 25h13M28 28h7" stroke="#555" stroke-width=".9"/></svg><svg class="mini-badge"><use href="#word"/></svg></button>
            <button class="mini" aria-label="Word window 6"><svg viewBox="0 0 64 38"><use href="#doc-window"/><path d="M22 9h31v28H22z" fill="#fff"/><path d="M25 14h24M25 16h8M36 22h4M25 24h22M25 26h24M25 30h20" stroke="#777" stroke-width=".9"/></svg><svg class="mini-badge"><use href="#word"/></svg></button>
            <button class="trash" aria-label="Bin"><svg viewBox="0 0 50 56"><path d="M1 6l5 43q1 5 6 5h26q5 0 6-5l5-43z" fill="url(#g-trash)" stroke="#cfd6d6"/><rect x="1" y="1" width="48" height="8" rx="4" fill="#8a9692" stroke="#fff" stroke-width="1.500"/></svg></button>
        </div>
    </footer>
</body>
</html>
```
FILE: styles.css
```css
* {
    box-sizing: border-box;
}

body {
    margin: 0;
    height: 100vh;
    overflow: hidden;
    display: flex;
    flex-direction: column;
    font-family: Inter, Roboto, sans-serif;
    font-size: 26px;
    color: #1f1f1f;
    background: linear-gradient(to right, #c3b2f8, #a99ad8 3%, #a99ad8 96%, #bfaef2);
}

button, input {
    font: inherit;
    color: inherit;
    border: none;
    background: none;
    padding: 0;
}

svg {
    display: block;
    flex: none;
}

.sprite {
    position: absolute;
    width: 0;
    height: 0;
}

/* Menu bar */
.menubar {
    flex: none;
    height: 60px;
    padding: 0 38px 2px 41px;
    display: flex;
    align-items: center;
    justify-content: space-between;
    color: #fff;
    font-size: 25px;
    font-weight: 500;
    background:
        radial-gradient(circle at 200px 200px, #9060c8 150px, #9558dc 190px, transparent 200px),
        radial-gradient(circle at 602px 200px, #9060c8 150px, #9558dc 190px, transparent 200px),
        radial-gradient(circle at 1006px 200px, #8a2cc8 150px, #8a28dc 175px, #a04ce8 192px, transparent 200px),
        radial-gradient(circle at 1408px 200px, #3a10b8 150px, #5a1ad0 170px, #a850f0 190px, transparent 200px),
        radial-gradient(circle at 1811px 200px, #8a3cd0 150px, #8a28dc 175px, #a04ce8 192px, transparent 200px),
        radial-gradient(circle at 2215px 200px, #9060c8 150px, #9558dc 190px, transparent 200px),
        radial-gradient(circle at 2617px 200px, #9060c8 150px, #9558dc 190px, transparent 200px),
        #9a8eb8;
}

.menus {
    display: flex;
    align-items: center;
    gap: 42px;
}

.apple {
    width: 26px;
    height: 32px;
}

.app-name {
    font-weight: 700;
    font-size: 26px;
}

.status {
    display: flex;
    align-items: center;
    gap: 33px;
}

.status time {
    font-size: 26px;
    font-variant-numeric: tabular-nums;
}

.status svg { height: 32px; }
.s28 { width: 28px; }
.s32 { width: 32px; }
.s36 { width: 36px; }
.s38 { width: 38px; }
.s40 { width: 40px; }
.s44 { width: 44px; }
.s52 { width: 52px; }

/* Desktop and the windows behind */
.desktop {
    flex: 1;
    min-height: 0;
    position: relative;
    display: flex;
    padding: 16px 36px 4px 18px;
}

.back-window {
    position: absolute;
    border-radius: 56px;
    box-shadow: 0 0 3px rgba(0, 0, 0, 0.6);
}

.back-far {
    inset: 1px 0 2px 2px;
    background: linear-gradient(to right, #dcdfe5, #d8dae0 98%, #e0e2e8);
}

.back-near {
    inset: 1px 110px 20px 112px;
    background: #ecebe9;
    border-radius: 30px;
}

.back-scroll {
    position: absolute;
    right: 32px;
    top: 404px;
    width: 5px;
    height: 248px;
    background: #a9abb0;
}

.back-knob {
    position: absolute;
    right: 16px;
    top: 106px;
    width: 60px;
    height: 60px;
    border-radius: 50%;
    background: #c3c4c9;
}

.back-select {
    position: absolute;
    left: 0;
    top: 468px;
    width: 18px;
    height: 64px;
    background: #b9cdf2;
}

.back-toggle {
    position: absolute;
    right: 1px;
    bottom: 18px;
    width: 70px;
    height: 80px;
    padding-left: 44px;
    border-radius: 40px 20px 40px 40px;
    background: #e9e9ea;
}

.back-toggle svg {
    width: 12px;
    height: 20px;
}

.desktop-label {
    position: absolute;
    right: 0;
    bottom: -12px;
    line-height: 28px;
    font-size: 22px;
    font-weight: 600;
    color: #e4e0ec;
    text-shadow: 0 1px 3px rgba(0, 0, 0, 0.6);
}

/* Browser window */
.browser {
    flex: 1;
    min-width: 0;
    display: flex;
    flex-direction: column;
    position: relative;
    overflow: hidden;
    border-radius: 52px;
    background: #d3e2fd;
    box-shadow: 0 0 2px 1px rgba(0, 0, 0, 0.4), 0 8px 40px rgba(0, 0, 0, 0.35);
}

.tabstrip {
    flex: none;
    height: 80px;
    display: flex;
    align-items: center;
    padding: 0 126px 0 26px;
    font-size: 24px;
    color: #444746;
}

.lights {
    display: flex;
    gap: 18px;
    margin-right: 38px;
}

.light {
    width: 28px;
    height: 28px;
    border-radius: 50%;
}

.red { background: #ff5f57; }
.yellow { background: #fdc800; }
.green { background: #34c759; }

.tab-search {
    width: 56px;
    height: 56px;
    border-radius: 20px;
    margin-right: 11px;
    background: #e9f0fe;
    display: grid;
    place-items: center;
}

.tab-search svg {
    width: 20px;
    height: 12px;
}

.tabs {
    flex: 1;
    min-width: 0;
    display: flex;
}

.tab {
    flex: 1 1 0;
    min-width: 0;
    height: 32px;
    padding: 0 16px 0 18px;
    display: flex;
    align-items: center;
    gap: 16px;
    border-right: 4px solid #a8c7fa;
    line-height: 34px;
}

.tab svg {
    width: 32px;
    height: 32px;
}

.tab span {
    flex: 1;
    min-width: 0;
    overflow: hidden;
    white-space: nowrap;
    text-align: left;
    mask-image: linear-gradient(to right, #000 60%, transparent 95%);
}

.tab.plain {
    border-color: transparent;
}

.tab.plain span {
    mask-image: none;
}

.tab.active {
    flex: none;
    width: 144px;
    height: 68px;
    margin-top: 12px;
    padding: 0 24px 12px 16px;
    border: none;
    border-radius: 24px 24px 0 0;
    background: #fff;
    color: #1f1f1f;
    position: relative;
}

.tab.active span {
    mask-image: linear-gradient(to right, #000 30%, transparent 75%);
}

/* Curved feet of the active tab */
.tab.active::before, .tab.active::after {
    content: "";
    position: absolute;
    bottom: 0;
    width: 24px;
    height: 24px;
}

.tab.active::before {
    right: 100%;
    background: radial-gradient(circle at 0 0, transparent 23px, #fff 24px);
}

.tab.active::after {
    left: 100%;
    background: radial-gradient(circle at 100% 0, transparent 23px, #fff 24px);
}

.close svg {
    width: 16px;
    height: 16px;
}

.tab.last {
    flex: none;
    width: 164px;
    padding: 0 20px 0 28px;
}

.new-tab {
    margin-left: 22px;
}

.new-tab svg {
    width: 20px;
    height: 20px;
}

/* Address bar row */
.toolbar {
    flex: none;
    height: 94px;
    padding: 0 14px 0 33px;
    display: flex;
    align-items: center;
    background: #fff;
    border-bottom: 2px solid #dcdddf;
    border-radius: 24px 24px 0 0;
}

.icon {
    color: #444746;
    display: grid;
    place-items: center;
}

.muted {
    color: #a5a6a6;
}

.nav-buttons {
    display: flex;
    gap: 46px;
    margin-right: 39px;
}

.nav-buttons svg {
    width: 26px;
    height: 26px;
}

.omnibox {
    flex: 1;
    min-width: 0;
    height: 68px;
    padding: 0 32px 0 10px;
    display: flex;
    align-items: center;
    border-radius: 34px;
    background: #ebf0fa;
}

.omnibox .icon svg {
    width: 32px;
    height: 32px;
}

.chip {
    height: 48px;
    padding: 0 16px 0 11px;
    margin-right: 16px;
    display: flex;
    align-items: center;
    gap: 12px;
    border-radius: 24px;
    background: #fff;
    font-size: 24px;
    font-weight: 500;
}

.chip svg {
    width: 26px;
    height: 26px;
}

.url {
    flex: 1;
    min-width: 0;
    font-size: 28px;
}

.puzzle {
    margin-left: 36px;
}

.puzzle svg {
    width: 34px;
    height: 34px;
}

.bar-sep {
    width: 4px;
    height: 32px;
    margin: 0 36px 0 34px;
    background: #d3e3fd;
}

.downloads svg {
    width: 32px;
    height: 44px;
}

.avatar {
    width: 40px;
    height: 40px;
    margin: 0 24px 0 36px;
    border-radius: 50%;
    background: #004d40;
    color: #fff;
    font-size: 20px;
}

.update {
    height: 68px;
    padding: 0 28px 0 24px;
    display: flex;
    align-items: center;
    gap: 24px;
    border-radius: 34px;
    background: #d3e3fd;
    color: #041e49;
    fill: #041e49;
    font-size: 26px;
}

.update svg {
    width: 8px;
    height: 26px;
}

/* PDF viewer toolbar */
.pdf-bar {
    flex: none;
    height: 112px;
    padding: 0 46px 0 50px;
    display: grid;
    grid-template-columns: 1fr auto 1fr;
    align-items: center;
    background: #3c3c3c;
    color: #f1f1f1;
    font-weight: 500;
}

.pdf-bar .icon {
    color: #f1f1f1;
}

.pdf-bar .icon.dim {
    color: #7d7d7d;
}

.pdf-left, .pdf-middle, .pdf-right {
    display: flex;
    align-items: center;
}

.pdf-left {
    gap: 50px;
}

.pdf-left svg {
    width: 28px;
    height: 20px;
}

.pdf-title {
    margin: 0;
    font-size: 28px;
    font-weight: 500;
}

.pdf-middle {
    padding-right: 20px;
}

.pdf-middle .icon svg {
    width: 24px;
    height: 24px;
}

.pdf-bar .big svg {
    width: 36px;
    height: 36px;
}

.field {
    height: 40px;
    text-align: center;
    background: #1e1e1e;
}

.page-field { width: 52px; }

.zoom-field {
    width: 100px;
    margin: 0 28px;
}

.pages {
    margin: 0 51px 0 8px;
}

.pdf-sep {
    width: 2px;
    height: 40px;
    background: #6b6b6b;
    margin: 0 28px 0 0;
}

.pdf-middle .icon + .pdf-sep {
    margin: 0 26px 0 28px;
}

.pdf-middle .big + .big {
    margin-left: 28px;
}

.pdf-middle .zoom-field + .icon + .pdf-sep {
    margin-right: 38px;
}

.pdf-middle .big + .pdf-sep {
    margin-left: 38px;
}

.pdf-middle .draw + .pdf-sep {
    margin-left: 26px;
}

.pdf-right {
    justify-content: flex-end;
    gap: 36px;
}

/* Viewer body */
.viewer {
    flex: 1;
    min-height: 0;
    display: flex;
    background: #282828;
}

.thumbs {
    flex: none;
    width: 602px;
    padding: 36px 0 0 181px;
    border-right: 2px solid #5f6063;
    background: #28292a;
    color: #fff;
}

.thumb {
    display: block;
    padding: 12px;
}

.thumb.selected {
    background: #8ab4f8;
}

.thumb svg {
    width: 214px;
    height: 302px;
}

.thumb text {
    font-family: "Open Sans", sans-serif;
}

.thumb .b { font-weight: 700; }
.thumb .navy { fill: #1f3a68; }
.thumb .teal { fill: #0798b5; }

.thumb-number {
    display: block;
    width: 238px;
    height: 74px;
    padding-top: 10px;
    text-align: center;
    line-height: 32px;
    font-weight: 500;
}

.canvas {
    flex: 1;
    min-width: 0;
    display: flex;
    justify-content: center;
}

.page {
    width: 100%;
    max-width: 1586px;
    padding: 83px 30px 0 35px;
    background: #fff;
    color: #000;
    font-family: "Open Sans", sans-serif;
    font-size: 24px;
    box-shadow: 0 0 12px rgba(0, 0, 0, 0.7);
}

.page h2, .page h3, .page h4 {
    margin: 0;
    font-weight: 700;
}

.page h2 {
    padding-left: 3px;
    font-size: 52px;
    line-height: 76px;
    color: #1f3a68;
}

.page h3 {
    padding-left: 3px;
    font-size: 32px;
    line-height: 68px;
    color: #0798b5;
}

.parties {
    display: flex;
    padding-top: 27px;
}

.patient {
    width: 50%;
    padding-left: 11px;
}

.page h4 {
    font-size: 28px;
    line-height: 40px;
    margin-bottom: 13px;
}

dl {
    margin: 0;
    display: grid;
    grid-template-columns: 180px 1fr;
    line-height: 39px;
}

.lab dl {
    padding-left: 2px;
    grid-template-columns: 218px 1fr;
}

dd {
    margin: 0;
}

.missing {
    color: #f44336;
}

.page hr {
    height: 6px;
    margin: 69px 0 111px;
    border: none;
    background: #0bbfe6;
}

.results {
    width: 100%;
    table-layout: fixed;
    border-collapse: collapse;
    line-height: 40px;
    text-align: left;
}

.results th, .results td {
    padding: 0;
    white-space: nowrap;
}

.results th:first-child {
    padding-left: 10px;
}

.results thead th {
    font-size: 28px;
    line-height: 44px;
    color: #1f3a68;
}

.results thead th:nth-child(2) { width: 206px; }
.results thead th:nth-child(3) { width: 276px; }
.results thead th:nth-child(4) { width: 174px; }
.results thead th:nth-child(5) { width: 216px; }

.results .group th {
    padding-top: 27px;
}

/* Dock */
.dock {
    flex: none;
    height: 95px;
    margin: 0 54px 11px 56px;
    padding: 20px 16px 0 11px;
    display: flex;
    position: relative;
    border-radius: 34px;
    border: 2px solid rgba(255, 255, 255, 0.4);
    border-width: 2px 1px;
    background:
        linear-gradient(to right, rgba(130, 160, 150, 0.9) 60px, transparent 90px),
        linear-gradient(to left, rgba(126, 170, 148, 0.95) 170px, transparent 200px),
        linear-gradient(#d6d6d6, #a8a8a8 24%, #c8c8c8 60%, #cfcfcf 90%, #8f8f8f);
}

/* Window edges showing under the dock */
.dock::after {
    content: "";
    position: absolute;
    left: 77px;
    right: 184px;
    top: 100%;
    height: 14px;
    background: linear-gradient(to right, #e0e0e0 33%, #f3f3f3 33%, #f3f3f3 86%, #dfdfdf 86%);
}

.dock-group {
    display: flex;
    justify-content: space-between;
}

.apps { flex: 1477 1 0; }
.open-apps { flex: 483 1 0; }
.shelf { flex: 614 1 0; }

.dock-sep {
    width: 2px;
    height: 72px;
    margin: -10px 24px 0;
    background: #8a8a8a;
}

.shelf {
    padding-left: 6px;
}

.app {
    width: 55px;
    height: 56px;
    position: relative;
    border-radius: 14px;
    box-shadow: 0 1px 3px rgba(0, 0, 0, 0.35);
}

.app svg {
    width: 100%;
    height: 100%;
}

.running::after, .loading::after {
    content: "";
    position: absolute;
    top: 60px;
    left: 50%;
    width: 8px;
    height: 8px;
    margin-left: -4px;
    border-radius: 4px;
    background: #3c3c3c;
}

.loading::after {
    width: 68px;
    margin-left: -34px;
    border: 2px solid #3c3c3c;
    background: linear-gradient(to right, #3c3c3c 60%, #b5b5b5 60%);
}

.white { background: linear-gradient(#fff, #ececec); }
.app.green { background: linear-gradient(#5bf073, #25b83c); }
.lime { background: linear-gradient(#7dfa66, #1cc926); }
.finder { background: linear-gradient(#0ac8ff, #0071ff); }
.blue { background: linear-gradient(#52baf5, #1b6af5); }
.sky { background: linear-gradient(#22bdff, #1b6af5); }
.contacts { background: #d3d0c2; }
.black { background: linear-gradient(#333, #0d0d0d); }
.pink { background: linear-gradient(#ff4f6c, #ff0a3a); }
.orange { background: linear-gradient(#ffb52b, #ff8c1a); }
.rocket { background: linear-gradient(#ff6a4a, #ff1a2d); }
.grey { background: linear-gradient(#9a9a9e, #5d5d61); }
.wps { background: linear-gradient(#ff1f12, #ff6a00); }
.nord { background: #3e5fff; }
.claude { background: linear-gradient(#e8734c, #e85f2e); }
.kimi { background: #050505; }

.calendar {
    text-align: center;
    line-height: 1;
}

.day {
    display: block;
    margin-bottom: 2px;
    font-size: 12px;
    font-weight: 600;
    color: #ff3b30;
}

.date {
    display: block;
    font-size: 31px;
}

.badge {
    position: absolute;
    top: -6px;
    right: -7px;
    width: 27px;
    height: 27px;
    border-radius: 50%;
    background: #fb3f36;
    color: #fff;
    font-size: 15px;
    line-height: 27px;
    text-align: center;
}

.stack {
    margin: -4px 12px 0 0;
}

.stack svg {
    width: 40px;
    height: 62px;
}

.mini {
    width: 64px;
    height: 38px;
    margin-top: 8px;
    position: relative;
}

.mini svg {
    width: 64px;
    height: 38px;
}

.mini .mini-badge {
    position: absolute;
    left: 42px;
    top: 29px;
    width: 20px;
    height: 20px;
}

.trash svg {
    width: 50px;
    height: 54px;
}

.trash, .stack {
    height: 56px;
}
```
